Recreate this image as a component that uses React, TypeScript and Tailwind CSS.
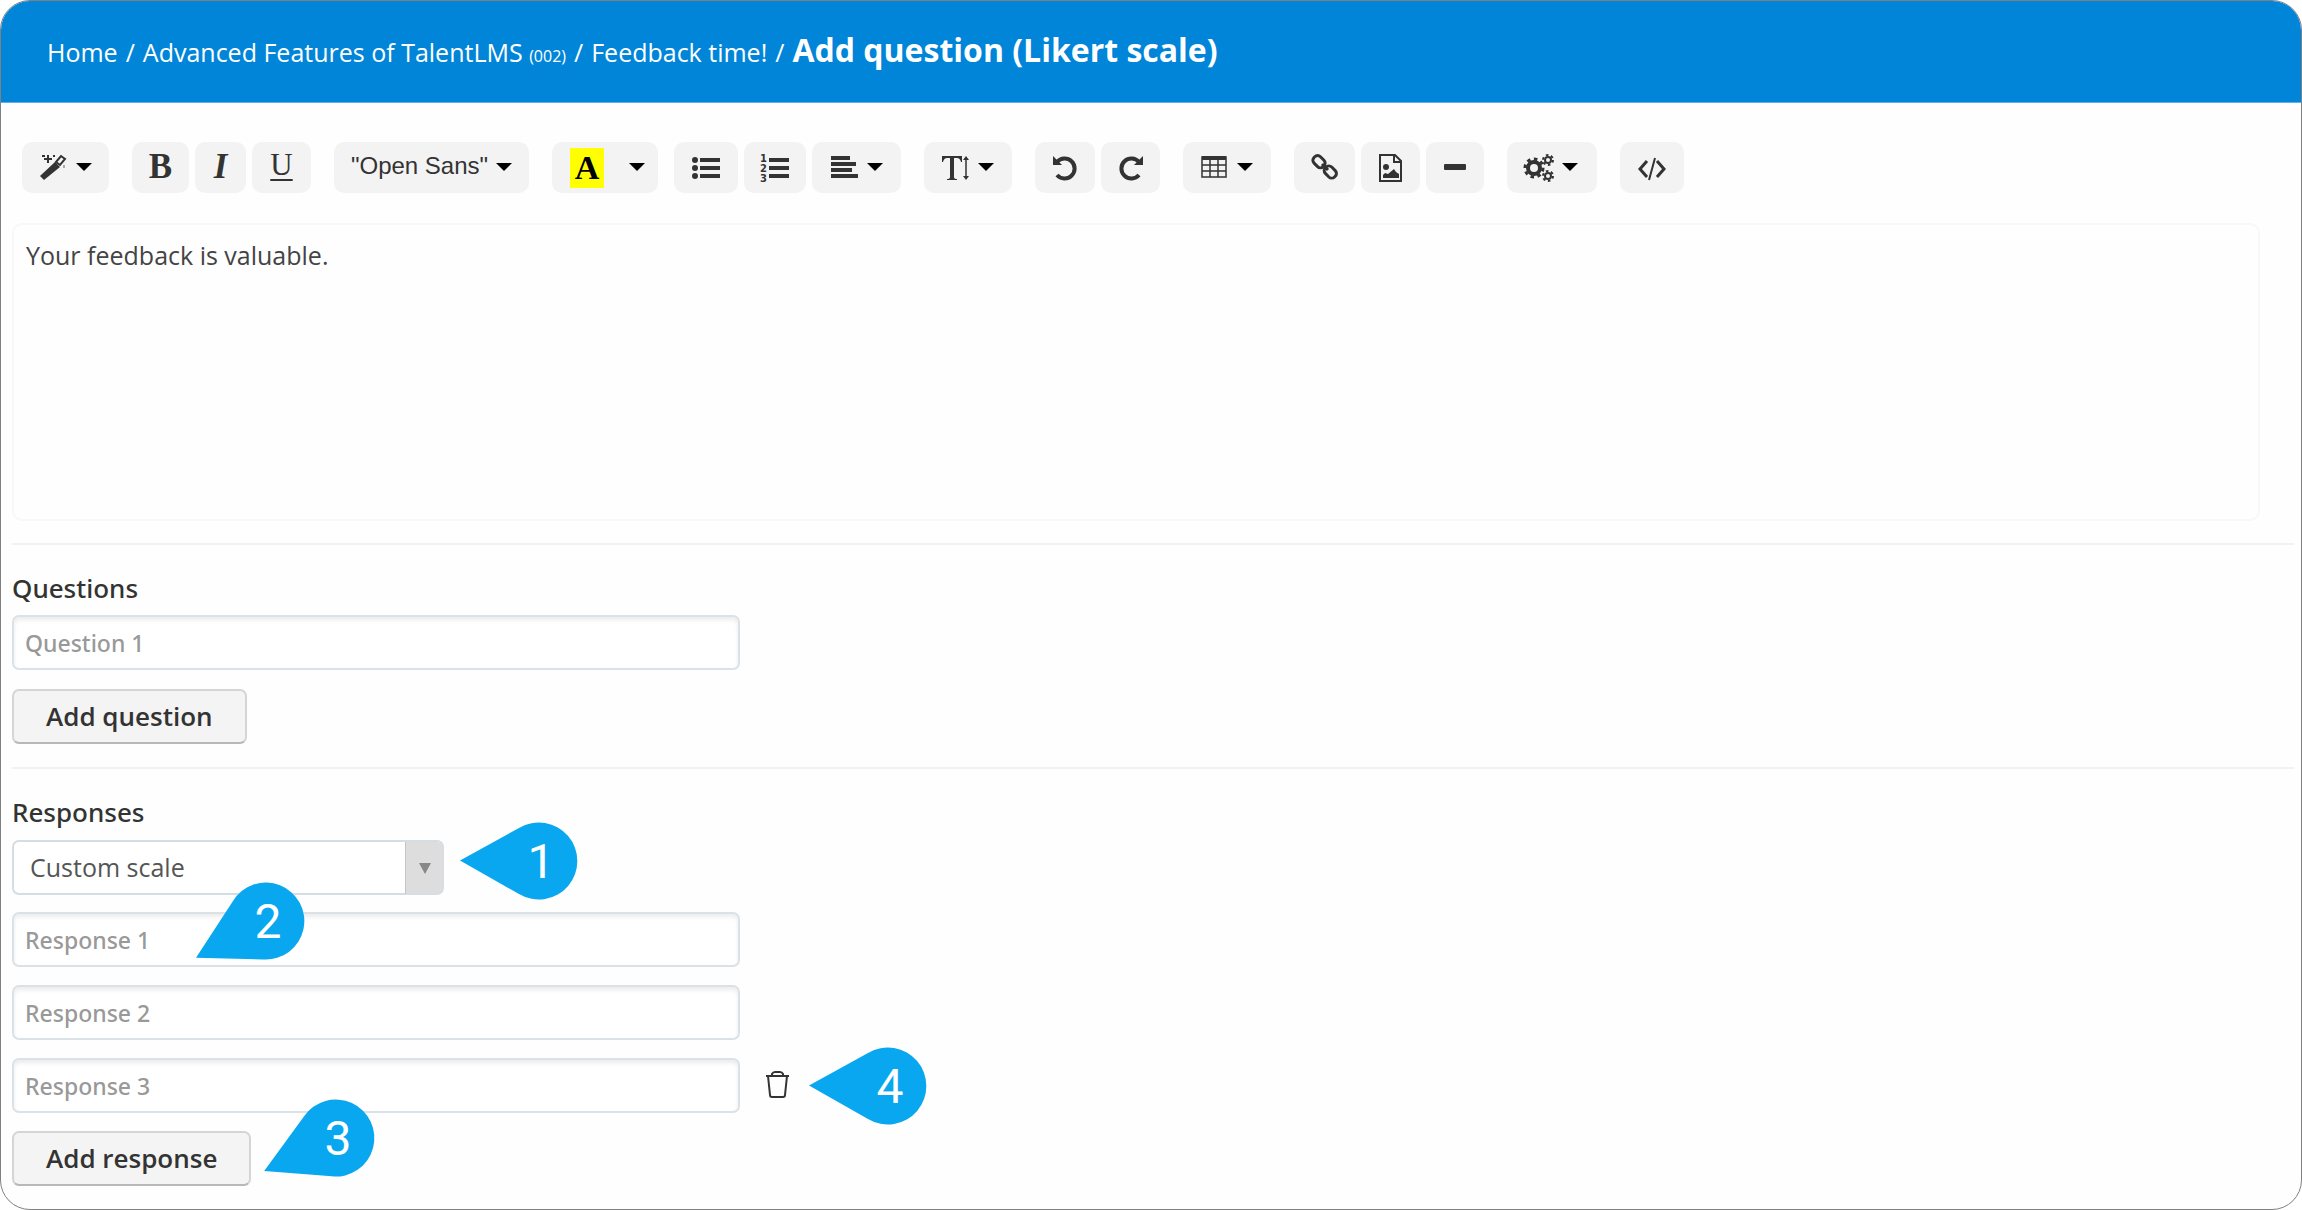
import type { ReactNode } from "react";

const responses = ["Response 1", "Response 2", "Response 3"];

function Caret() {
  return (
    <svg width="16" height="8" viewBox="0 0 16 8" fill="#000" className="mb-[2px]" aria-hidden="true">
      <path d="M0 0h16L8 8z" />
    </svg>
  );
}

function Tool({ label, className, children }: { label: string; className: string; children: ReactNode }) {
  return (
    <button
      type="button"
      aria-label={label}
      className={`flex h-[51px] shrink-0 items-center justify-center gap-2 rounded-[10px] bg-[#f3f3f3] text-[#333] ${className}`}
    >
      {children}
    </button>
  );
}

function Group({ children }: { children: ReactNode }) {
  return <div className="flex shrink-0 gap-[6px]">{children}</div>;
}

function Glyph({ children }: { children: ReactNode }) {
  return (
    <svg width="28" height="28" viewBox="0 0 28 28" fill="#333" className="overflow-visible" aria-hidden="true">
      {children}
    </svg>
  );
}

const pinTurns = {
  left: "",
  steep: "rotate(-28 80 39)",
  slanted: "rotate(-25 80 39)",
};

function Pin({ n, turn, className }: { n: number; turn: keyof typeof pinTurns; className: string }) {
  return (
    <div className={`pointer-events-none absolute z-10 ${className}`}>
      <svg width="119" height="78" viewBox="0 0 119 78" className="overflow-visible" fill="#08a7ef">
        <path transform={pinTurns[turn]} d="M1 38.5 60 6a38.5 38.5 0 1 1 0 66z" />
        <text x="82" y="56" textAnchor="middle" fill="#fff" fontSize="48" fontFamily="Roboto, sans-serif">
          {n}
        </text>
      </svg>
    </div>
  );
}

const fieldClass =
  "h-[55px] w-[728px] max-w-full rounded-[7px] border-2 border-[#dbe2e7] bg-white px-[11px] text-[24px] text-[#333] shadow-[inset_0_3px_4px_rgba(0,0,0,0.08)] outline-none placeholder:font-['Noto_Sans',sans-serif] placeholder:text-[23px] placeholder:font-medium placeholder:text-[#999]";

const labelClass = "block text-[26px] leading-[40px] font-medium font-['Noto_Sans','Open_Sans',sans-serif]";

const actionClass =
  "h-[55px] rounded-[7px] border-2 border-[#d5d5d5] border-b-[#b8b8b8] bg-[#f4f4f4] px-8 text-[26px] font-semibold text-[#333]";

export default function App() {
  return (
    <main className="min-h-screen overflow-hidden rounded-[30px] border border-[#808080] bg-[#fefefe] font-['Open_Sans','Noto_Sans',sans-serif] text-[#333]">
      <nav
        aria-label="Breadcrumb"
        className="flex h-[102px] items-baseline gap-2 border-b border-[#5fb0e6] bg-[#0085d9] px-[46px] pt-[29px] text-[25px] leading-[40px] text-white"
      >
        <a href="#home">Home</a>
        <span>/</span>
        <a href="#course">
          Advanced Features of TalentLMS <small className="text-[16px]">(002)</small>
        </a>
        <span>/</span>
        <a href="#unit">Feedback time!</a>
        <span>/</span>
        <h1 className="text-[32px] font-bold">Add question (Likert scale)</h1>
      </nav>

      <div className="flex gap-[23px] px-[21px] pt-[39px]">
        <Tool label="Style" className="w-[87px]">
          <Glyph>
            <path d="M0 22 15 8l5 5L4 26z" />
            <path d="m16 8 5-6 4 3-5 6z" fill="none" stroke="#333" strokeWidth="2" />
            <path d="M8 1v8M4 5h8" stroke="#333" strokeWidth="2" />
            <path d="M2 1h3v2H2zM13 1h2v2h-2z" />
            <path d="M23 11h2v3h-2z" fill="#aaa" />
          </Glyph>
          <Caret />
        </Tool>
        <Group>
          <Tool label="Bold" className="w-[57px]">
            <b className="font-['Liberation_Serif',serif] text-[35px]">B</b>
          </Tool>
          <Tool label="Italic" className="w-[51px]">
            <i className="font-['Liberation_Serif',serif] text-[35px] font-bold">I</i>
          </Tool>
          <Tool label="Underline" className="w-[59px] pb-[5px]">
            <u className="font-['Liberation_Serif',serif] text-[31px] decoration-2 underline-offset-4">U</u>
          </Tool>
        </Group>
        <Tool label="Font family" className="w-[195px]">
          <span className="pb-[3px] font-['Liberation_Sans',sans-serif] text-[24px]">"Open Sans"</span>
          <Caret />
        </Tool>
        <div className="-mr-[7px] flex shrink-0 overflow-hidden rounded-[10px]">
          <button
            type="button"
            aria-label="Text colour"
            className="flex h-[51px] w-[64px] items-center justify-end bg-[#f3f3f3] pr-[12px]"
          >
            <b className="flex h-[40px] w-[34px] items-center justify-center bg-[#ff0] font-['Liberation_Serif',serif] text-[34px] text-black">
              A
            </b>
          </button>
          <button
            type="button"
            aria-label="More colours"
            className="flex h-[51px] w-[42px] items-center justify-center bg-[#f3f3f3]"
          >
            <Caret />
          </button>
        </div>
        <Group>
          <Tool label="Unordered list" className="w-[64px]">
            <Glyph>
              <circle cx="3" cy="6" r="3" />
              <circle cx="3" cy="14" r="3" />
              <circle cx="3" cy="22" r="3" />
              <path d="M8 4h20v4H8zM8 12h20v4H8zM8 20h20v4H8z" />
            </Glyph>
          </Tool>
          <Tool label="Ordered list" className="w-[62px]">
            <Glyph>
              <path d="M8 4h20v4H8zM8 12h20v4H8zM8 20h20v4H8z" />
              <g fontFamily="DejaVu Sans, sans-serif" fontWeight="700" fontSize="10">
                <text x="-1" y="8">1</text>
                <text x="-1" y="18">2</text>
                <text x="-1" y="28">3</text>
              </g>
            </Glyph>
          </Tool>
          <Tool label="Paragraph" className="w-[89px]">
            <Glyph>
              <path d="M0 2h19v4H0zM0 8h25v4H0zM0 14h21v4H0zM0 20h27v4H0z" />
            </Glyph>
            <Caret />
          </Tool>
        </Group>
        <Tool label="Line height" className="w-[88px]">
          <Glyph>
            <path d="M0 2h20v6h-1q-1-4-4-4h-3v19q0 2 3 2v1H5v-1q3 0 3-2V4H5Q2 4 1 8H0z" />
            <path d="M24 5v19" fill="none" stroke="#333" strokeWidth="1.5" />
            <path d="m24 2 3 4h-6zM24 26l3-4h-6z" />
          </Glyph>
          <Caret />
        </Tool>
        <Group>
          <Tool label="Undo" className="w-[60px]">
            <Glyph>
              <path d="M6 8a10 10 0 1 1 0 13" fill="none" stroke="#333" strokeWidth="4" />
              <path d="M2 2v9h9z" />
            </Glyph>
          </Tool>
          <Tool label="Redo" className="w-[59px]">
            <Glyph>
              <path d="M22 8a10 10 0 1 0 0 13" fill="none" stroke="#333" strokeWidth="4" />
              <path d="M26 2v9h-9z" />
            </Glyph>
          </Tool>
        </Group>
        <Tool label="Table" className="w-[88px]">
          <Glyph>
            <path d="M1 3h24v20H1zM1 11h24M1 17h24M9 5v18M17 5v18" fill="none" stroke="#333" strokeWidth="1.5" />
            <path d="M1 2h24v4H1z" />
          </Glyph>
          <Caret />
        </Tool>
        <Group>
          <Tool label="Link" className="w-[61px]">
            <Glyph>
              <g fill="none" stroke="#333" strokeWidth="3">
                <rect x="2" y="3" width="13" height="9" rx="4" transform="rotate(45 8 7)" />
                <rect x="13" y="14" width="13" height="9" rx="4" transform="rotate(45 20 18)" />
                <path d="m11 10 6 6" />
              </g>
            </Glyph>
          </Tool>
          <Tool label="Picture" className="w-[59px]">
            <Glyph>
              <path d="M3 1h15l6 6v20H3zM17 1v7h7" fill="none" stroke="#333" strokeWidth="2" />
              <circle cx="9" cy="13" r="3" />
              <path d="M6 24v-3l2-2 3 1 6-5 2 3 3 2v4z" />
            </Glyph>
          </Tool>
          <Tool label="Horizontal rule" className="w-[58px]">
            <Glyph>
              <rect x="3" y="10" width="22" height="6" rx="1" />
            </Glyph>
          </Tool>
        </Group>
        <Tool label="Tools" className="w-[90px]">
          <Glyph>
            <g fill="none" stroke="#333">
              <circle cx="8" cy="14" r="6" strokeWidth="4" />
              <circle cx="8" cy="14" r="9" strokeWidth="3" strokeDasharray="3.5 3.5" />
              <circle cx="22" cy="6" r="3" strokeWidth="2" />
              <circle cx="22" cy="6" r="5" strokeWidth="2" strokeDasharray="2.6 2.6" />
              <circle cx="22" cy="22" r="3" strokeWidth="2" />
              <circle cx="22" cy="22" r="5" strokeWidth="2" strokeDasharray="2.6 2.6" />
            </g>
          </Glyph>
          <Caret />
        </Tool>
        <Tool label="Code view" className="w-[64px]">
          <Glyph>
            <path d="m9 7-7 8 7 8M19 7l7 8-7 8" fill="none" stroke="#333" strokeWidth="3" />
            <path d="m17 4-6 22" stroke="#333" strokeWidth="2" />
          </Glyph>
        </Tool>
      </div>

      <div className="pt-[30px] pr-[41px] pl-[11px]">
        <textarea
          aria-label="Question text"
          defaultValue="Your feedback is valuable."
          className="block h-[298px] w-full resize-none rounded-[10px] border-2 border-[#f8f8f8] bg-transparent px-[12px] py-[12px] text-[25px] leading-[36px] text-[#444] outline-none"
        />
      </div>

      <section className="mt-[22px] mr-[7px] ml-[11px] border-t-2 border-[#f2f2f2] pt-[23px]">
        <label htmlFor="question-1" className={labelClass}>
          Questions
        </label>
        <input id="question-1" type="text" placeholder="Question 1" className={`mt-[7px] block ${fieldClass}`} />
        <button type="button" className={`mt-[19px] ${actionClass}`}>
          Add question
        </button>
      </section>

      <section className="mt-[23px] mr-[7px] ml-[11px] border-t-2 border-[#f2f2f2] pt-[23px]">
        <label htmlFor="scale" className={labelClass}>
          Responses
        </label>
        <div className="relative mt-[8px] w-[432px]">
          <select
            id="scale"
            className="block h-[55px] w-full appearance-none rounded-[7px] border-2 border-[#d3dde3] bg-white px-4 text-[25px] text-[#555] outline-none"
          >
            <option>Custom scale</option>
          </select>
          <span className="pointer-events-none absolute top-[2px] right-[1px] bottom-[1px] flex w-[38px] items-center justify-center rounded-r-[6px] border-l border-[#c4c4c4] bg-[#ddd]">
            <svg width="12" height="11" viewBox="0 0 12 11" fill="#888" aria-hidden="true">
              <path d="M0 0h12L6 11z" />
            </svg>
          </span>
          <Pin n={1} turn="left" className="-top-[18px] left-[447px]" />
        </div>
        <div className="relative mt-[17px] flex flex-col gap-[18px]">
          {responses.map((name, i) => (
            <div key={name} className="flex items-center gap-[26px]">
              <input type="text" aria-label={name} placeholder={name} className={fieldClass} />
              {i === 2 && (
                <button type="button" aria-label="Delete response" className="pb-[3px]">
                  <svg width="23" height="28" viewBox="0 0 23 28" fill="none" stroke="#333" strokeWidth="2">
                    <path d="M0 6h23M6 6V4q1-2 3-2h5q2 0 3 2v2M2 6l2 19q0 2 2 2h11q2 0 2-2l2-19" />
                  </svg>
                </button>
              )}
            </div>
          ))}
          <Pin n={2} turn="steep" className="-top-[30px] left-[174px]" />
          <Pin n={4} turn="left" className="top-[135px] left-[796px]" />
        </div>
        <div className="relative mt-[18px] mb-[22px] flex">
          <button type="button" className={actionClass}>
            Add response
          </button>
          <Pin n={3} turn="slanted" className="-top-[32px] left-[244px]" />
        </div>
      </section>
    </main>
  );
}
